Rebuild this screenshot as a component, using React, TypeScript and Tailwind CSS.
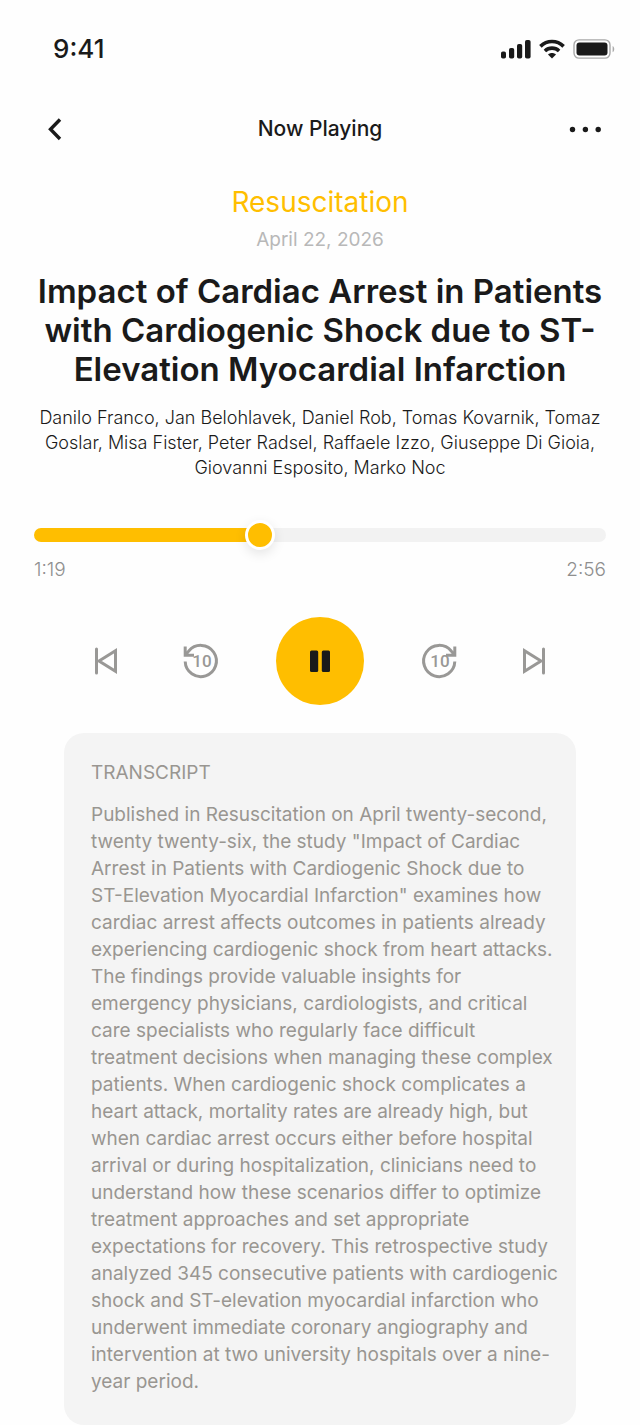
import React, { useState } from 'react';

const AUTHORS = `Danilo Franco, Jan Belohlavek, Daniel Rob, Tomas Kovarnik, Tomaz
Goslar, Misa Fister, Peter Radsel, Raffaele Izzo, Giuseppe Di Gioia,
Giovanni Esposito, Marko Noc`;

const TITLE = `Impact of Cardiac Arrest in Patients
with Cardiogenic Shock due to ST-
Elevation Myocardial Infarction`;

const TRANSCRIPT = `Published in Resuscitation on April twenty-second,
twenty twenty-six, the study "Impact of Cardiac
Arrest in Patients with Cardiogenic Shock due to
ST-Elevation Myocardial Infarction" examines how
cardiac arrest affects outcomes in patients already
experiencing cardiogenic shock from heart attacks.
The findings provide valuable insights for
emergency physicians, cardiologists, and critical
care specialists who regularly face difficult
treatment decisions when managing these complex
patients. When cardiogenic shock complicates a
heart attack, mortality rates are already high, but
when cardiac arrest occurs either before hospital
arrival or during hospitalization, clinicians need to
understand how these scenarios differ to optimize
treatment approaches and set appropriate
expectations for recovery. This retrospective study
analyzed 345 consecutive patients with cardiogenic
shock and ST-elevation myocardial infarction who
underwent immediate coronary angiography and
intervention at two university hospitals over a nine-
year period.`;

const StatusBar = () => (
  <div className="flex h-[98px] items-center justify-between pl-[53px] pr-6">
    <span className="text-[26px] font-medium leading-8">9:41</span>
    <div className="flex items-center gap-2">
      <svg className="h-5 w-[30px]" viewBox="0 0 30 20" fill="currentColor">
        <rect x="0" y="12.5" width="5" height="7" rx="1.8" />
        <rect x="8" y="9" width="5.2" height="10.5" rx="1.8" />
        <rect x="16" y="5" width="5.2" height="14.5" rx="1.8" />
        <rect x="24" y="1" width="5.6" height="18.5" rx="1.8" />
      </svg>
      <svg className="h-5 w-[26px]" viewBox="0 0 26 20" fill="none" stroke="currentColor" strokeWidth="3.6">
        <path d="M1.4 7.4C8 .9 18 .9 24.6 7.4" />
        <path d="M5.9 12C10 8.2 16 8.2 20.1 12" />
        <path d="M13 19.6l-4-4.2c2.3-2 5.7-2 8 0z" fill="currentColor" stroke="none" />
      </svg>
      <svg className="h-5 w-[43px]" viewBox="0 0 43 20">
        <rect x="1" y=".9" width="36" height="18.2" rx="5" fill="none" stroke="#a9a9a9" strokeWidth="1.4" />
        <rect x="3.5" y="3.5" width="31" height="13" rx="3" fill="#1a1a1a" />
        <path d="M39.6 7v6.2c2.2-1 2.2-5.2 0-6.2z" fill="#a9a9a9" />
      </svg>
    </div>
  </div>
);

const ReplayIcon = ({ forward = false }: { forward?: boolean }) => (
  <svg className="h-10 w-10" viewBox="0 0 40 40" fill="none" stroke="currentColor" strokeWidth="3">
    <g transform={forward ? 'matrix(-1 0 0 1 40 0)' : undefined}>
      <path d="M4.2 20.5A15.6 15.6 0 1 0 7.8 10L4.8 13.2" />
      <path d="M4.2 5.5V14.2H13" />
      <path d="M4.2 14.2V9.5L9 14.2Z" fill="currentColor" stroke="none" />
    </g>
    <text x="21" y="26" textAnchor="middle" fontSize="17" fontWeight="500" fontFamily="Roboto, sans-serif" fill="currentColor" stroke="none">
      10
    </text>
  </svg>
);

const SkipIcon = ({ forward = false }: { forward?: boolean }) => (
  <svg className="h-10 w-10" viewBox="0 0 40 40" fill="none" stroke="currentColor" strokeWidth="3">
    <g transform={forward ? 'matrix(-1 0 0 1 40 0)' : undefined}>
      <path d="M10.5 8V32" strokeLinecap="round" />
      <path d="M13 20L29.5 9.8V30.2Z" />
    </g>
  </svg>
);

const App: React.FC = () => {
  const [progress, setProgress] = useState(39);
  const [isPlaying, setIsPlaying] = useState(true);

  return (
    <div className="bg-[#fefefe] font-[Inter,sans-serif] text-[#1a1a1a]">
      <StatusBar />

      <header className="grid h-[62px] grid-cols-3 items-center px-9">
        <button aria-label="Back" className="justify-self-start">
          <svg className="h-6 w-9" viewBox="0 0 36 24" fill="none" stroke="currentColor" strokeWidth="3.4">
            <path d="M24 2.5L14.5 12.3L24 22" />
          </svg>
        </button>
        <h2 className="text-center text-[21px] font-medium leading-7">Now Playing</h2>
        <button aria-label="More options" className="justify-self-end">
          <svg className="h-6 w-9" viewBox="0 0 36 24" fill="currentColor">
            <circle cx="4.5" cy="12.5" r="2.7" />
            <circle cx="17.4" cy="12.5" r="2.7" />
            <circle cx="30.2" cy="12.5" r="2.7" />
          </svg>
        </button>
      </header>

      <main className="px-[34px] pt-[22px]">
        <section className="text-center">
          <p className="text-[28px] leading-10 text-[#ffbe00]">Resuscitation</p>
          <p className="mt-1.5 text-[19px] leading-6 text-[#b8b8b8]">April 22, 2026</p>
          <h1 className="mt-5 whitespace-pre text-[33px] font-semibold leading-[39px]">{TITLE}</h1>
          <p className="mt-4 whitespace-pre text-[18px] font-light leading-[25px]">{AUTHORS}</p>
        </section>

        <input
          type="range"
          aria-label="Playback position"
          min={0}
          max={100}
          value={progress}
          onChange={(e) => setProgress(Number(e.target.value))}
          style={{ '--progress': `${progress}%` } as React.CSSProperties}
          className="mt-10 block h-[30px] w-full cursor-pointer appearance-none bg-transparent [&::-webkit-slider-runnable-track]:h-[14px] [&::-webkit-slider-runnable-track]:rounded-full [&::-webkit-slider-runnable-track]:bg-[linear-gradient(to_right,#ffbe00_var(--progress),#f2f2f2_var(--progress))] [&::-webkit-slider-thumb]:-mt-2 [&::-webkit-slider-thumb]:h-[30px] [&::-webkit-slider-thumb]:w-[30px] [&::-webkit-slider-thumb]:appearance-none [&::-webkit-slider-thumb]:rounded-full [&::-webkit-slider-thumb]:border-[3px] [&::-webkit-slider-thumb]:border-solid [&::-webkit-slider-thumb]:border-white [&::-webkit-slider-thumb]:bg-[#ffbe00] [&::-webkit-slider-thumb]:shadow-[0_4px_12px_rgba(0,0,0,0.1)]"
        />
        <div className="mt-2 flex justify-between text-[19px] font-light leading-6 text-[#8f8f8f]">
          <span>1:19</span>
          <span>2:56</span>
        </div>

        <div className="mt-[35px] flex items-center justify-center gap-[55px] text-[#999896]">
          <button aria-label="Previous">
            <SkipIcon />
          </button>
          <button aria-label="Back 10 seconds">
            <ReplayIcon />
          </button>
          <button
            aria-label={isPlaying ? 'Pause' : 'Play'}
            onClick={() => setIsPlaying(!isPlaying)}
            className="flex h-[88px] w-[88px] items-center justify-center rounded-full bg-[#ffbe00] text-[#1a1a1a]"
          >
            <svg className="h-6 w-6" viewBox="0 0 24 24" fill="currentColor">
              {isPlaying ? (
                <>
                  <rect x="2" y="1.5" width="8.2" height="21.5" rx="1.5" />
                  <rect x="13.8" y="1.5" width="8.2" height="21.5" rx="1.5" />
                </>
              ) : (
                <path d="M5 2l17 10L5 22z" />
              )}
            </svg>
          </button>
          <button aria-label="Forward 10 seconds">
            <ReplayIcon forward />
          </button>
          <button aria-label="Next">
            <SkipIcon forward />
          </button>
        </div>

        <section className="mx-[30px] mt-7 rounded-[20px] bg-[#f4f4f4] px-[27px] pb-[30px] pt-7 text-[#999691]">
          <h3 className="text-[19px] leading-6">TRANSCRIPT</h3>
          <p className="mt-4 whitespace-pre text-[19px] leading-[27px]">{TRANSCRIPT}</p>
        </section>
      </main>
    </div>
  );
};

export default App;
